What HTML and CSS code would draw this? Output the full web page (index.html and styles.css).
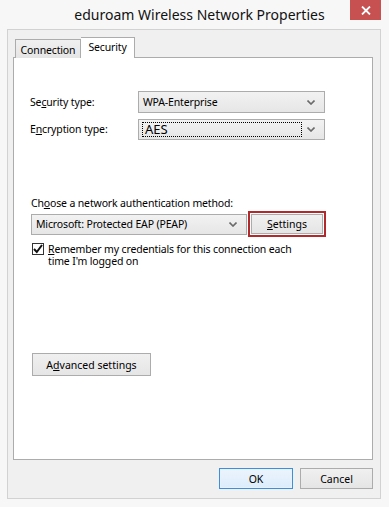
FILE: index.html
```html
<!DOCTYPE html>
<html lang="en">
  <head>
    <meta charset="UTF-8" />
    <title>eduroam Wireless Network Properties</title>
    <link rel="stylesheet" href="styles.css">
  </head>
  <body>
    <div class="window">
      <div class="titlebar">
        <span></span>
        <div class="title">eduroam Wireless Network Properties</div>
        <button class="close" aria-label="Close">
          <svg width="10" height="9" viewBox="0 0 10 9">
            <path d="M1 0.5 L9 8.5 M9 0.5 L1 8.5" stroke="#fff" stroke-width="1.8" />
          </svg>
        </button>
      </div>

      <div class="client">
        <div class="tabs">
          <div class="tab">Connection</div>
          <div class="tab selected">Security</div>
        </div>

        <div class="panel">
          <div class="field-grid">
            <span class="label">Se<u>c</u>urity type:</span>
            <div class="combo">
              <span>WPA-Enterprise</span>
              <svg class="chevron" width="8" height="5" viewBox="0 0 8 5"><path d="M0.5 0.5 L4 4 L7.5 0.5" /></svg>
            </div>

            <span class="label">E<u>n</u>cryption type:</span>
            <div class="combo focused">
              <span class="focus-ring">AES</span>
              <svg class="chevron" width="8" height="5" viewBox="0 0 8 5"><path d="M0.5 0.5 L4 4 L7.5 0.5" /></svg>
            </div>
          </div>

          <div class="auth">
            <div class="auth-title">Ch<u>o</u>ose a network authentication method:</div>
            <div class="auth-row">
              <div class="combo wide">
                <span>Microsoft: Protected EAP (PEAP)</span>
                <svg class="chevron" width="8" height="5" viewBox="0 0 8 5"><path d="M0.5 0.5 L4 4 L7.5 0.5" /></svg>
              </div>
              <div class="highlight">
                <button class="button settings"><u>S</u>ettings</button>
              </div>
            </div>
            <label class="check">
              <span class="box">
                <svg width="10" height="10" viewBox="0 0 10 10"><path d="M1 5 L3.8 8 L9 1" /></svg>
              </span>
              <span><u>R</u>emember my credentials for this connection each<br />time I'm logged on</span>
            </label>
          </div>

          <button class="button advanced">A<u>d</u>vanced settings</button>
        </div>

        <div class="footer">
          <button class="button default">OK</button>
          <button class="button">Cancel</button>
        </div>
      </div>
    </div>
  </body>
</html>
```

FILE: styles.css
```css
body {
  margin: 0;
  background: #f7f7f7;
  font-family: "Noto Sans", "Open Sans", sans-serif;
  font-size: 10.5px;
  letter-spacing: -0.15px;
  color: #000;
}

.window {
  width: 389px;
  height: 507px;
  box-sizing: border-box;
  padding: 0 8px 8px 7px;
}

.titlebar {
  display: grid;
  grid-template-columns: 1fr auto 1fr;
  align-items: start;
  height: 29px;
  margin-right: -7px;
}

.title {
  font-size: 14px;
  letter-spacing: 0;
  color: #111;
  padding-top: 5px;
  margin-left: 4px;
}

.close {
  justify-self: end;
  width: 31px;
  height: 20px;
  margin: 0 7px 0 0;
  padding: 0;
  border: none;
  background: #c75050;
  display: flex;
  align-items: center;
  justify-content: center;
}

.client {
  height: 470px;
  box-sizing: border-box;
  border: 1px solid #d2d2d2;
  background: #f0f0f0;
  padding: 7px 7px 0 5px;
}

.tabs {
  display: flex;
  align-items: flex-end;
  padding-left: 2px;
  margin-bottom: -1px;
}

.tab {
  height: 17px;
  width: 64px;
  border: 1px solid #acacac;
  border-bottom: none;
  background: linear-gradient(#f0f0f0, #e5e5e5);
  display: flex;
  align-items: center;
  justify-content: center;
  padding-top: 1px;
}

.tab.selected {
  position: relative;
  z-index: 1;
  width: 53px;
  height: 17px;
  padding-top: 2px;
  padding-bottom: 1px;
  border-left: none;
  background: #fff;
  align-items: flex-start;
}

.panel {
  height: 403px;
  box-sizing: border-box;
  border: 1px solid #acacac;
  background: #fff;
  padding: 33px 0 0 16px;
}

.field-grid {
  display: grid;
  grid-template-columns: 108px 187px;
  row-gap: 6px;
  align-items: center;
}

.label {
  line-height: 15px;
}

.combo {
  height: 22px;
  box-sizing: border-box;
  border: 1px solid #acacac;
  background: linear-gradient(#f2f2f2, #e6e6e6);
  display: flex;
  align-items: center;
  justify-content: space-between;
  padding: 0 9px 0 4px;
}

.combo.focused {
  height: 21px;
  padding-left: 3px;
}

.focus-ring {
  width: 160px;
  height: 15px;
  box-sizing: border-box;
  border: 1px dotted #000;
  font-size: 13px;
  letter-spacing: 0;
  line-height: 13px;
  padding-left: 2px;
}

.chevron path {
  fill: none;
  stroke: #6a6a6a;
  stroke-width: 1.6;
}

.auth {
  margin-top: 56px;
}

.auth-title {
  line-height: 15px;
  padding-left: 1px;
}

.auth-row {
  display: flex;
  align-items: center;
  gap: 1px;
  padding-left: 1px;
}

.combo.wide {
  width: 216px;
  height: 21px;
}

.highlight {
  border: 2px solid #b2292c;
  padding: 1px;
}

.button {
  font: inherit;
  color: #000;
  height: 21px;
  box-sizing: border-box;
  border: 1px solid #acacac;
  background: linear-gradient(#f0f0f0, #e5e5e5);
  padding: 0;
}

.settings {
  width: 72px;
  height: 20px;
  display: block;
}

.check {
  display: flex;
  align-items: flex-start;
  gap: 4px;
  margin-top: 6px;
  padding-left: 2px;
  line-height: 12px;
}

.box {
  width: 10px;
  height: 10px;
  border: 1px solid #333;
  background: #fff;
  display: flex;
}

.box path {
  fill: none;
  stroke: #111;
  stroke-width: 2;
}

.advanced {
  display: block;
  width: 119px;
  height: 23px;
  margin: 86px 0 0 2px;
}

.footer {
  display: flex;
  justify-content: flex-end;
  gap: 7px;
  margin-top: 8px;
}

.footer .button {
  width: 73px;
}

.button.default {
  width: 74px;
  border-color: #3c8fd8;
  background: linear-gradient(#ecf4fc, #dcecfc);
  box-shadow: inset 0 0 0 1px #e5f1fb;
}
```
